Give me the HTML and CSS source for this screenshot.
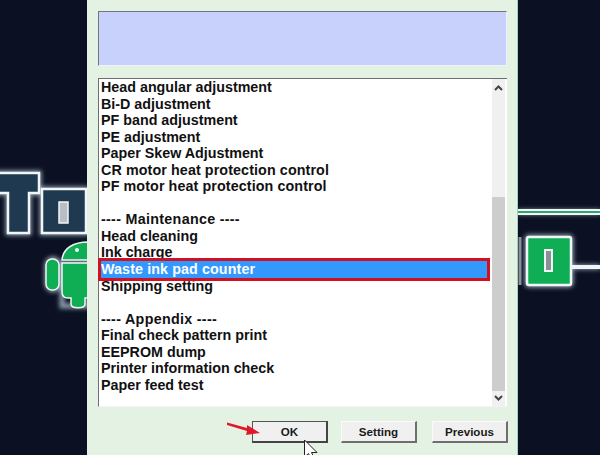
FILE: index.html
```html
<!DOCTYPE html>
<html lang="en">
<head>
<meta charset="utf-8">
<title>Adjustment program</title>
<link rel="stylesheet" href="styles.css">
</head>
<body>
<svg class="art" width="600" height="455" viewBox="0 0 600 455" aria-hidden="true">
  <defs>
    <filter id="glow" x="-20%" y="-20%" width="140%" height="140%"><feGaussianBlur stdDeviation="2"/></filter>
  </defs>
  <g filter="url(#glow)" fill="none" stroke="#8fa0b0" stroke-width="5">
    <path d="M-5 173H39V193H29V233H8V193H-5Z"/>
    <rect x="42" y="189" width="44" height="44"/>
    <path d="M518 212H600"/>
    <rect x="527" y="237" width="44" height="48" rx="2"/>
    <path d="M571 267H600"/>
    <rect x="47" y="259" width="12" height="31" rx="6"/>
    <path d="M62 263H88V306H62Z"/>
  </g>
  <path d="M-5 173H39V193H29V233H8V193H-5Z" fill="#1f3a50" stroke="#f2f5f7" stroke-width="2.500"/>
  <rect x="42" y="189" width="44" height="44" fill="#1f3a50" stroke="#f2f5f7" stroke-width="2.500"/>
  <rect x="59" y="202" width="9" height="21" fill="#b8bec4" stroke="#f2f5f7" stroke-width="1.500"/>
  <g fill="#0fae55" stroke="#f2f5f7" stroke-width="1.500">
    <rect x="46" y="259" width="13" height="31" rx="6"/>
    <path d="M62 260C63 248 74 242 88 242V260Z"/>
    <path d="M62 263H88V298H85V304C85 309 71 309 71 304V298H68C64 298 62 296 62 292Z"/>
  </g>
  <circle cx="77" cy="250" r="2" fill="#f2f5f7"/>
  <path d="M518 212H600" stroke="#f2f5f7" stroke-width="6"/>
  <path d="M518 212H600" stroke="#31a56b" stroke-width="2"/>
  <rect x="527" y="237" width="44" height="48" rx="2" fill="#0fae55" stroke="#f2f5f7" stroke-width="2.500"/>
  <rect x="545" y="250" width="7" height="21" fill="#8b9097" stroke="#f2f5f7" stroke-width="2"/>
  <path d="M571 267H600" stroke="#f2f5f7" stroke-width="4"/>
  <path d="M520 237V285" stroke="#8c9196" stroke-width="3"/>
</svg>

<main class="dialog">
  <div class="message"></div>
  <div class="listbox">
    <ul class="items">
      <li>Head angular adjustment</li>
      <li>Bi-D adjustment</li>
      <li>PF band adjustment</li>
      <li>PE adjustment</li>
      <li>Paper Skew Adjustment</li>
      <li class="wide">CR motor heat protection control</li>
      <li class="wide">PF motor heat protection control</li>
      <li class="blank"></li>
      <li class="heading">---- Maintenance ----</li>
      <li>Head cleaning</li>
      <li>Ink charge</li>
      <li class="selected">Waste ink pad counter</li>
      <li>Shipping setting</li>
      <li class="blank"></li>
      <li class="heading">---- Appendix ----</li>
      <li>Final check pattern print</li>
      <li>EEPROM dump</li>
      <li>Printer information check</li>
      <li>Paper feed test</li>
    </ul>
    <div class="scrollbar">
      <svg class="arrow" width="13" height="17" viewBox="0 0 13 17" aria-hidden="true"><path d="M3 11L6.500 7.500L10 11" fill="none" stroke="#444" stroke-width="2"/></svg>
      <div class="track"><div class="thumb"></div></div>
      <svg class="arrow" width="13" height="15" viewBox="0 0 13 15" aria-hidden="true"><path d="M3 5L6.500 8.500L10 5" fill="none" stroke="#444" stroke-width="2"/></svg>
    </div>
  </div>
  <div class="actions">
    <button class="btn btn-ok" type="button">OK</button>
    <button class="btn" type="button">Setting</button>
    <button class="btn btn-prev" type="button">Previous</button>
  </div>
</main>

<svg class="pointer" width="100" height="34" viewBox="0 0 100 34" aria-hidden="true">
  <path d="M0 1.500L20 7L20 4L33 12L19 14L20 10L0 4Z" fill="#e3172b"/>
  <path d="M77.500 19V36L81.500 32.500L84.500 39L87.500 37.600L84.500 31.500H90Z" fill="#fff" stroke="#222" stroke-width="1"/>
</svg>
</body>
</html>
```
FILE: styles.css
```css
* { box-sizing: border-box; }
html, body { margin: 0; padding: 0; }
body {
  width: 600px;
  height: 455px;
  overflow: hidden;
  position: relative;
  background: #0b1122;
  font-family: "Liberation Sans", Arial, sans-serif;
}
.art { position: absolute; left: 0; top: 0; }
.dialog {
  position: relative;
  width: 431px;
  height: 455px;
  margin-left: 87px;
  padding: 11px 11px 0;
  background: #e3f2e3;
  border-right: 1px solid #9fd3c0;
  display: flex;
  flex-direction: column;
}
.message {
  height: 55px;
  width: 409px;
  background: #c7d1fb;
  border-top: 1px solid #6f7680;
  border-left: 1px solid #6f7680;
  border-right: 1px solid #eef2fb;
  border-bottom: 1px solid #eef2fb;
}
.listbox {
  margin-top: 12px;
  width: 409px;
  height: 329px;
  background: #fff;
  border-top: 1px solid #6b6f73;
  border-left: 1px solid #6b6f73;
  border-bottom: 1px solid #f0f4f0;
  display: flex;
  justify-content: space-between;
  padding-right: 1px;
}
.items {
  list-style: none;
  margin: 0;
  padding: 0;
  width: 391px;
  font-size: 14.300px;
  font-weight: 700;
  color: #111;
}
.items li {
  height: 16.550px;
  line-height: 16.550px;
  padding-left: 2px;
  white-space: nowrap;
}
.items .wide { letter-spacing: 0.100px; }
.items .heading { letter-spacing: 0.300px; }
.items .selected {
  background: #3399ff;
  color: #fff;
  letter-spacing: 0.100px;
  outline: 3px solid #d2101f;
  margin: 0 3px 0 2px;
  padding-left: 0;
}
.scrollbar {
  width: 13px;
  margin-right: 1px;
  background: #f0f0f0;
  display: flex;
  flex-direction: column;
}
.arrow { flex: none; display: block; }
.track { flex: 1; padding-top: 101px; display: flex; }
.thumb { flex: 1; background: #cdcdcd; }
.actions {
  display: flex;
  gap: 13px;
  margin-top: 14px;
  margin-left: 154px;
}
.btn {
  flex: none;
  width: 76px;
  height: 22px;
  padding: 0;
  font: 700 11.600px "Liberation Sans", Arial, sans-serif;
  color: #1a1a1a;
  background: #f0f0f0;
  border: 1px solid #fafafa;
  border-right: 2px solid #6e6e6e;
  border-bottom: 2px solid #6e6e6e;
}
.btn-ok {
  border-top: 1px solid #555;
  border-left: 1px solid #555;
  border-right: 2px solid #444;
  border-bottom: 2px solid #444;
}
.btn-prev { margin-left: 2px; }
.pointer { position: absolute; left: 227px; top: 421px; }
```
